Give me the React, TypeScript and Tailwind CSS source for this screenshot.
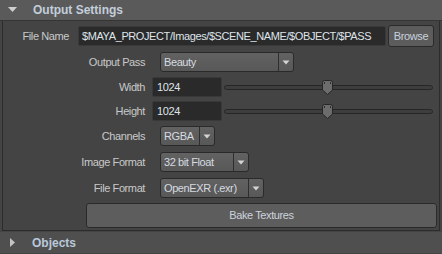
import React from "react";

const font = { fontFamily: '"Liberation Sans", Arial, sans-serif' };

function Arrow() {
  return (
    <svg width="8" height="5" viewBox="0 0 8 5">
      <path d="M0.5 0.5 H7.5 L4 4.5 Z" fill="#d4d4d4" />
    </svg>
  );
}

function Dropdown({ value, width }: { value: string; width: string }) {
  return (
    <div
      className={`ml-[15px] h-[20px] ${width} flex rounded-[3px] border border-[#2a2a2a] bg-gradient-to-b from-[#626262] to-[#585858]`}
    >
      <div className="flex-1 flex items-center pl-[3px] text-[#d6dbe0] whitespace-nowrap overflow-hidden">
        {value}
      </div>
      <div className="w-[15px] border-l border-[#2e2e2e] flex items-center justify-center">
        <Arrow />
      </div>
    </div>
  );
}

function Label({ children }: { children: React.ReactNode }) {
  return <div className="w-[142px] text-right text-[#c9c9c9] whitespace-nowrap">{children}</div>;
}

function Handle() {
  return (
    <svg width="11" height="15" viewBox="0 0 11 15" className="absolute left-[98px] top-[-5px]">
      <path
        d="M0.5 2.5 Q0.5 0.5 2.5 0.5 H8.5 Q10.5 0.5 10.5 2.5 V10 L5.5 14.5 L0.5 10 Z"
        fill="#6c6c6c"
        stroke="#262626"
      />
      <path d="M2.5 2 V4 M8.5 2 V4" stroke="#2e2e2e" strokeWidth="1" />
    </svg>
  );
}

function Slider() {
  return (
    <div className="ml-[2px] w-[209px] relative h-[5px]">
      <div className="h-[5px] rounded-full border border-[#262626] bg-[#3e3e3e]" />
      <Handle />
    </div>
  );
}

function NumField({ value }: { value: string }) {
  return (
    <div className="ml-[7px] w-[70px] h-[20px] rounded-[2px] border border-[#393939] bg-[#2a2a2a] flex items-center pl-[4px] text-[#dfe4ea]">
      {value}
    </div>
  );
}

export default function App() {
  return (
    <div
      className="w-[442px] h-[254px] bg-[#444444] overflow-hidden text-[11px] tracking-[-0.4px] leading-none"
      style={font}
    >
      <div className="h-[21px] bg-[#5a5a5a] border-b border-[#353535] flex items-center">
        <svg width="9" height="5" viewBox="0 0 9 5" className="ml-[8px] mb-[2px]">
          <path d="M0 0 H9 L4.5 5 Z" fill="#cfcfcf" />
        </svg>
        <span className="ml-[16px] text-[12px] font-bold tracking-normal text-[#c3cedb]">
          Output Settings
        </span>
      </div>
      <div className="mx-[2px] h-[210px] border-x border-b border-[#2c2c2c] flex flex-col">
        <div className="mt-[4px] h-[22px] flex items-center">
          <div className="w-[66px] text-right text-[#c9c9c9] whitespace-nowrap">File Name</div>
          <div className="ml-[9px] w-[308px] h-[20px] rounded-[2px] border border-[#393939] bg-[#2a2a2a] flex items-center pl-[3px] text-[#dfe4ea] whitespace-nowrap overflow-hidden">
            $MAYA_PROJECT/Images/$SCENE_NAME/$OBJECT/$PASS
          </div>
          <div className="ml-[2px] w-[46px] h-[22px] rounded-[3px] border border-[#2a2a2a] bg-[#5c5c5c] flex items-center justify-center text-[#c8d1dc]">
            Browse
          </div>
        </div>
        <div className="mt-[5px] h-[20px] flex items-center">
          <Label>Output Pass</Label>
          <Dropdown value="Beauty" width="w-[134px]" />
        </div>
        <div className="mt-[5px] h-[20px] flex items-center">
          <Label>Width</Label>
          <NumField value="1024" />
          <Slider />
        </div>
        <div className="mt-[4px] h-[20px] flex items-center">
          <Label>Height</Label>
          <NumField value="1024" />
          <Slider />
        </div>
        <div className="mt-[5px] h-[20px] flex items-center">
          <Label>Channels</Label>
          <Dropdown value="RGBA" width="w-[55px]" />
        </div>
        <div className="mt-[6px] h-[20px] flex items-center">
          <Label>Image Format</Label>
          <Dropdown value="32 bit Float" width="w-[89px]" />
        </div>
        <div className="mt-[6px] h-[20px] flex items-center">
          <Label>File Format</Label>
          <Dropdown value="OpenEXR (.exr)" width="w-[104px]" />
        </div>
        <div className="mt-[5px] ml-[83px] mr-[2px] h-[25px] rounded-[3px] border border-[#2a2a2a] bg-[#5d5d5d] flex items-center justify-center text-[#ccd3dc]">
          Bake Textures
        </div>
      </div>
      <div className="mt-[1px] h-[21px] bg-[#4f4f4f] flex items-center">
        <svg width="5" height="9" viewBox="0 0 5 9" className="ml-[10px]">
          <path d="M0 0 L5 4.5 L0 9 Z" fill="#c4c4c4" />
        </svg>
        <span className="ml-[17px] text-[12px] font-bold tracking-normal text-[#b9c8da]">Objects</span>
      </div>
    </div>
  );
}
